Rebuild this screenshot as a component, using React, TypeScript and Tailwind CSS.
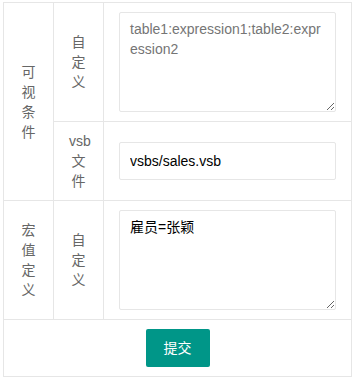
import { useState } from "react"

const cell = "border border-[#e6e6e6] px-[15px] py-[9px] align-middle"
const label = `${cell} text-center text-[#666]`

export default function App() {
  const [expr, setExpr] = useState("")
  const [vsb, setVsb] = useState("vsbs/sales.vsb")
  const [macro, setMacro] = useState("雇员=张颖")

  return (
    <div
      className="pl-[3px] pt-[2px] text-[14px] leading-[20px]"
      style={{ fontFamily: '"Liberation Sans", Arial, "Noto Sans CJK SC", sans-serif' }}
    >
      <table className="w-[349px] table-fixed border-collapse bg-white">
        <colgroup>
          <col className="w-[50px]" />
          <col className="w-[50px]" />
          <col />
        </colgroup>
        <tbody>
          <tr>
            <td rowSpan={2} className={label}>
              可视条件
            </td>
            <td className={label}>自定义</td>
            <td className={cell}>
              <textarea
                value={expr}
                onChange={(e) => setExpr(e.target.value)}
                placeholder="table1:expression1;table2:expression2"
                className="block h-[100px] w-full resize-y rounded-[2px] border border-[#e6e6e6] bg-white px-[10px] py-[6px] leading-[20px] text-black outline-none placeholder:text-[#757575]"
              />
            </td>
          </tr>
          <tr>
            <td className={label}>vsb文件</td>
            <td className={cell}>
              <input
                value={vsb}
                onChange={(e) => setVsb(e.target.value)}
                className="block h-[38px] w-full rounded-[2px] border border-[#e6e6e6] bg-white pl-[10px] text-black outline-none"
              />
            </td>
          </tr>
          <tr>
            <td className={label}>宏值定义</td>
            <td className={label}>自定义</td>
            <td className={cell}>
              <textarea
                value={macro}
                onChange={(e) => setMacro(e.target.value)}
                className="block h-[100px] w-full resize-y rounded-[2px] border border-[#e6e6e6] bg-white px-[10px] py-[6px] leading-[20px] text-black outline-none"
              />
            </td>
          </tr>
          <tr>
            <td colSpan={3} className={`${cell} text-center`}>
              <button
                type="button"
                className="inline-block h-[38px] rounded-[2px] bg-[#009688] px-[18px] align-middle leading-[38px] text-white"
              >
                提交
              </button>
            </td>
          </tr>
        </tbody>
      </table>
    </div>
  )
}
